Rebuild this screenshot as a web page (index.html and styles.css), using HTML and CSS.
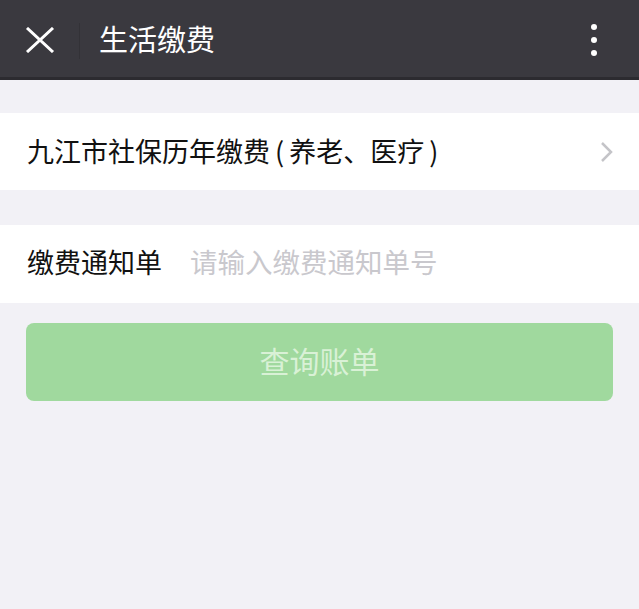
FILE: index.html
```html
<!DOCTYPE html>
<html lang="zh-CN">
<head>
    <meta charset="UTF-8">
    <meta name="viewport" content="width=device-width, initial-scale=1.0">
    <title>生活缴费</title>
    <link rel="stylesheet" href="styles.css">
</head>
<body>
    <div class="topbar">
        <div class="close">
            <svg width="30" height="26" viewBox="0 0 30 26">
                <path d="M2 1 L28 25 M28 1 L2 25" stroke="#fff" stroke-width="3" fill="none"/>
            </svg>
        </div>
        <div class="divider"></div>
        <div class="title">生活缴费</div>
        <div class="more">
            <span></span><span></span><span></span>
        </div>
    </div>

    <div class="cell link">
        <div class="cell-text">九江市社保历年缴费<span class="paren">(</span>养老、医疗<span class="paren">)</span></div>
        <svg class="arrow" width="14" height="22" viewBox="0 0 14 22">
            <path d="M2 2 L11 11 L2 20" stroke="#c4c4c8" stroke-width="2.5" fill="none"/>
        </svg>
    </div>

    <div class="cell form">
        <label for="bill">缴费通知单</label>
        <input type="text" id="bill" placeholder="请输入缴费通知单号">
    </div>

    <div class="actions">
        <button class="btn" disabled>查询账单</button>
    </div>
</body>
</html>
```

FILE: styles.css
```css
*{
    box-sizing: border-box;
}
body{
    margin: 0;
    background: #f2f1f6;
    font-family: "Noto Sans CJK SC", "Noto Sans", sans-serif;
    width: 639px;
    height: 609px;
    overflow: hidden;
}
.topbar{
    height: 80px;
    background: #3a393f;
    border-bottom: 3px solid #2c2b30;
    display: flex;
    align-items: center;
}
.close{
    width: 79px;
    display: flex;
    justify-content: center;
    padding-top: 2px;
}
.divider{
    width: 1px;
    height: 36px;
    background: #333237;
    margin-top: 4px;
}
.title{
    color: #fff;
    font-size: 29px;
    margin-left: 19px;
    flex: 1;
    line-height: 1;
}
.more{
    display: flex;
    flex-direction: column;
    gap: 7px;
    margin-right: 42px;
    margin-top: 2px;
}
.more span{
    width: 6px;
    height: 6px;
    border-radius: 50%;
    background: #fff;
}
.cell{
    background: #fff;
    display: flex;
    align-items: center;
    padding: 0 27px;
}
.link{
    margin-top: 33px;
    height: 77px;
    justify-content: space-between;
}
.cell-text{
    font-size: 27px;
    color: #111;
    margin-bottom: 2px;
}
.paren{
    margin: 0 5px;
}
.arrow{
    margin-right: -2px;
}
.form{
    margin-top: 35px;
    height: 78px;
    padding-bottom: 6px;
}
label{
    font-size: 27px;
    color: #111;
    width: 163px;
}
input{
    border: none;
    outline: none;
    flex: 1;
    font-family: inherit;
    font-size: 27.5px;
    padding: 0;
    background: transparent;
}
input::placeholder{
    color: #c9c8cd;
}
.actions{
    padding: 20px 26px 0 26px;
}
.btn{
    width: 100%;
    height: 78px;
    border: none;
    border-radius: 8px;
    background: #a0d99e;
    color: #d9f1d6;
    font-family: inherit;
    font-size: 30px;
    padding-bottom: 5px;
}
```
